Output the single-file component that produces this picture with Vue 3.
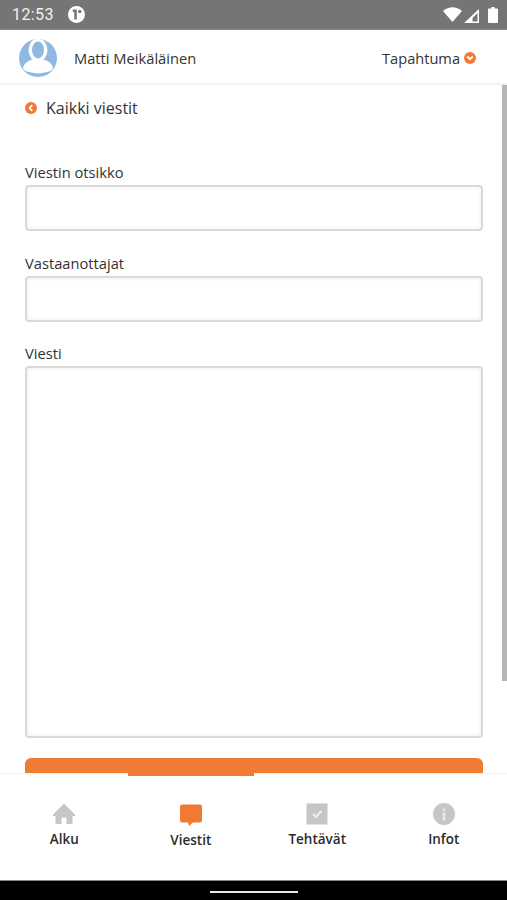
<script setup>
const tabs = [
  { label: 'Alku', icon: 'home' },
  { label: 'Viestit', icon: 'chat', active: true },
  { label: 'Tehtävät', icon: 'check' },
  { label: 'Infot', icon: 'info' }
]
</script>

<template>
  <div class="phone">
    <!-- status bar -->
    <div class="status-bar">
      <span class="clock">12:53</span>
      <svg class="status-badge" width="17" height="17" viewBox="0 0 17 17">
        <circle cx="8.500" cy="8.500" r="8.500" fill="#fff" />
        <path d="M4.800 3.500h4v10h-2.500v-7.500h-1.500z" fill="#757575" />
        <circle cx="11.800" cy="5.500" r="1.700" fill="#757575" />
      </svg>
      <span class="status-right">
        <svg class="wifi" width="19" height="15" viewBox="0 0 19 15"><path d="M0 4Q9.500-3.500 19 4L9.500 15z" fill="#fff" /></svg>
        <svg class="signal" width="15" height="14" viewBox="0 0 15 14"><path fill-rule="evenodd" d="M15 0v14H0zM13.500 4 8.500 9v3.500h5z" fill="#fff" /></svg>
        <svg class="battery" width="10" height="16" viewBox="0 0 10 16"><path d="M3.500 0h3v1.500H9a1 1 0 0 1 1 1V15a1 1 0 0 1-1 1H1a1 1 0 0 1-1-1V2.500a1 1 0 0 1 1-1h2.500z" fill="#fff" /></svg>
      </span>
    </div>

    <!-- header -->
    <header class="top-bar">
      <svg class="avatar" width="38" height="38" viewBox="0 0 38 38">
        <defs><clipPath id="avatarClip"><circle cx="19" cy="19" r="19" /></clipPath></defs>
        <circle cx="19" cy="19" r="19" fill="#8fb8e2" />
        <g clip-path="url(#avatarClip)">
          <ellipse cx="19" cy="11" rx="9.500" ry="11.500" fill="#fff" />
          <ellipse cx="19" cy="11" rx="6" ry="8.500" fill="#8fb8e2" />
          <path d="M4 29Q5 23 13 20.500Q19 23 25 20.500Q33 23 34 29Q34 33 19 34.500Q4 33 4 29z" fill="#fff" />
        </g>
      </svg>
      <span class="user-name">Matti Meikäläinen</span>
      <span class="event">
        Tapahtuma
        <svg width="12" height="12" viewBox="0 0 12 12">
          <circle cx="6" cy="6" r="6" fill="#f07a33" />
          <path d="M3.200 4.500 6 7.200l2.800-2.700" fill="none" stroke="#fff" stroke-width="1.800" />
        </svg>
      </span>
    </header>

    <!-- content -->
    <main class="content">
      <a class="back-link">
        <svg width="12" height="12" viewBox="0 0 12 12">
          <circle cx="6" cy="6" r="6" fill="#f07a33" />
          <path d="M7.300 3.200 4.600 6l2.700 2.800" fill="none" stroke="#fff" stroke-width="1.800" />
        </svg>
        Kaikki viestit
      </a>

      <form class="message-form">
        <label class="field-label">Viestin otsikko</label>
        <input class="field" type="text" />
        <label class="field-label">Vastaanottajat</label>
        <input class="field" type="text" />
        <label class="field-label">Viesti</label>
        <textarea class="field field-area"></textarea>
        <button class="send-btn" type="button"></button>
      </form>

      <div class="scrollbar"></div>
    </main>

    <!-- tabs -->
    <nav class="tabs">
      <div v-for="tab in tabs" :key="tab.label" class="tab" :class="{ active: tab.active }">
        <svg v-if="tab.icon === 'home'" width="24" height="24" viewBox="0 0 24 24">
          <path d="M12 1.500 23 12.500v1.500H20.500v8h-6v-6.500h-5V22h-6v-8H1v-1.500z" fill="#c6c6c6" />
        </svg>
        <svg v-else-if="tab.icon === 'chat'" width="24" height="24" viewBox="0 0 24 24">
          <path d="M3 1.500h18a2 2 0 0 1 2 2V17.500a2 2 0 0 1-2 2h-7l-4 3.500-1-3.500H3a2 2 0 0 1-2-2V3.500a2 2 0 0 1 2-2z" fill="#f07a33" />
        </svg>
        <svg v-else-if="tab.icon === 'check'" width="24" height="24" viewBox="0 0 24 24">
          <rect x="1.500" y="1.500" width="21" height="21" fill="#c6c6c6" />
          <path d="M8 12l3 3 5.500-6" fill="none" stroke="#eee" stroke-width="2" />
        </svg>
        <svg v-else width="24" height="24" viewBox="0 0 24 24">
          <circle cx="12" cy="12" r="11" fill="#c6c6c6" />
          <circle cx="12" cy="7.500" r="1.500" fill="#e6e6e6" />
          <rect x="10.500" y="10.500" width="3" height="8" fill="#e6e6e6" />
        </svg>
        <span class="tab-label">{{ tab.label }}</span>
      </div>
    </nav>

    <!-- android nav -->
    <div class="system-bar"><span class="home-pill"></span></div>
  </div>
</template>

<style scoped>
.phone {
  width: 507px;
  height: 900px;
  display: flex;
  flex-direction: column;
  overflow: hidden;
  background: #fff;
  font-family: "Open Sans", "Liberation Sans", sans-serif;
  color: #333;
}

.status-bar {
  flex: 0 0 30px;
  display: flex;
  align-items: center;
  padding: 0 9px 0 12px;
  background: #757575;
  border-bottom: 1px solid #8c8c8c;
  box-sizing: border-box;
}

.clock {
  font-family: Roboto, sans-serif;
  font-size: 16px;
  color: #f2f2f2;
  letter-spacing: 0.4px;
}

.status-badge {
  margin-left: 14px;
}

.status-right {
  margin-left: auto;
  display: flex;
  align-items: center;
}

.signal {
  margin-left: 2px;
  margin-top: 2px;
}

.battery {
  margin-left: 9px;
}

.top-bar {
  flex: 0 0 55px;
  display: flex;
  align-items: center;
  padding: 2px 31px 0 19px;
  box-sizing: border-box;
  border-bottom: 2px solid #f2f2f2;
}

.user-name {
  margin-left: 17px;
  font-size: 14.7px;
}

.event {
  margin-left: auto;
  display: flex;
  align-items: center;
  gap: 4px;
  font-size: 14.6px;
}

.content {
  position: relative;
  flex: 1;
  min-height: 0;
  overflow: hidden;
  padding: 13px 25px 0;
}

.back-link {
  display: flex;
  align-items: center;
  gap: 9px;
  height: 20px;
  font-size: 16px;
  line-height: 20px;
}

.message-form {
  display: flex;
  flex-direction: column;
  margin-top: 45px;
}

.field-label {
  font-size: 14.7px;
  line-height: 19px;
  margin-bottom: 3px;
}

.field {
  display: block;
  box-sizing: border-box;
  width: 457.500px;
  height: 46px;
  margin: 0 0 22.500px;
  padding: 0;
  background: #fff;
  border: 2px solid #dadada;
  border-radius: 4px;
  box-shadow: inset 0 0 4px #ececec;
  outline: none;
  resize: none;
}

.field-area {
  height: 372px;
  margin-bottom: 20px;
}

.send-btn {
  width: 457.500px;
  height: 46px;
  flex: none;
  border: 0;
  border-radius: 6px;
  background: #ef7b35;
}

.scrollbar {
  position: absolute;
  top: 0;
  right: 0;
  width: 5px;
  height: 596px;
  background: #b5b5b5;
}

.tabs {
  position: relative;
  flex: 0 0 107px;
  display: flex;
  padding-left: 1px;
  background: #fff;
  border-top: 1px solid #f0f0f0;
  box-sizing: border-box;
}

.tab {
  flex: 1;
  display: flex;
  flex-direction: column;
  align-items: center;
  padding-top: 29px;
  box-sizing: border-box;
  margin-top: -1px;
}

.tab.active {
  border-top: 3px solid #ef7b35;
  padding-top: 27px;
}

.tab-label {
  margin-top: 4px;
  font-size: 13.5px;
  font-weight: 600;
  line-height: 18px;
  color: #2b2b2b;
}

.system-bar {
  flex: 0 0 20px;
  display: flex;
  justify-content: center;
  align-items: center;
  background: #000;
  border-top: 1px solid #888;
  box-sizing: border-box;
}

.home-pill {
  width: 88px;
  height: 2px;
  margin-top: 2px;
  background: #e8e8e8;
}
</style>
